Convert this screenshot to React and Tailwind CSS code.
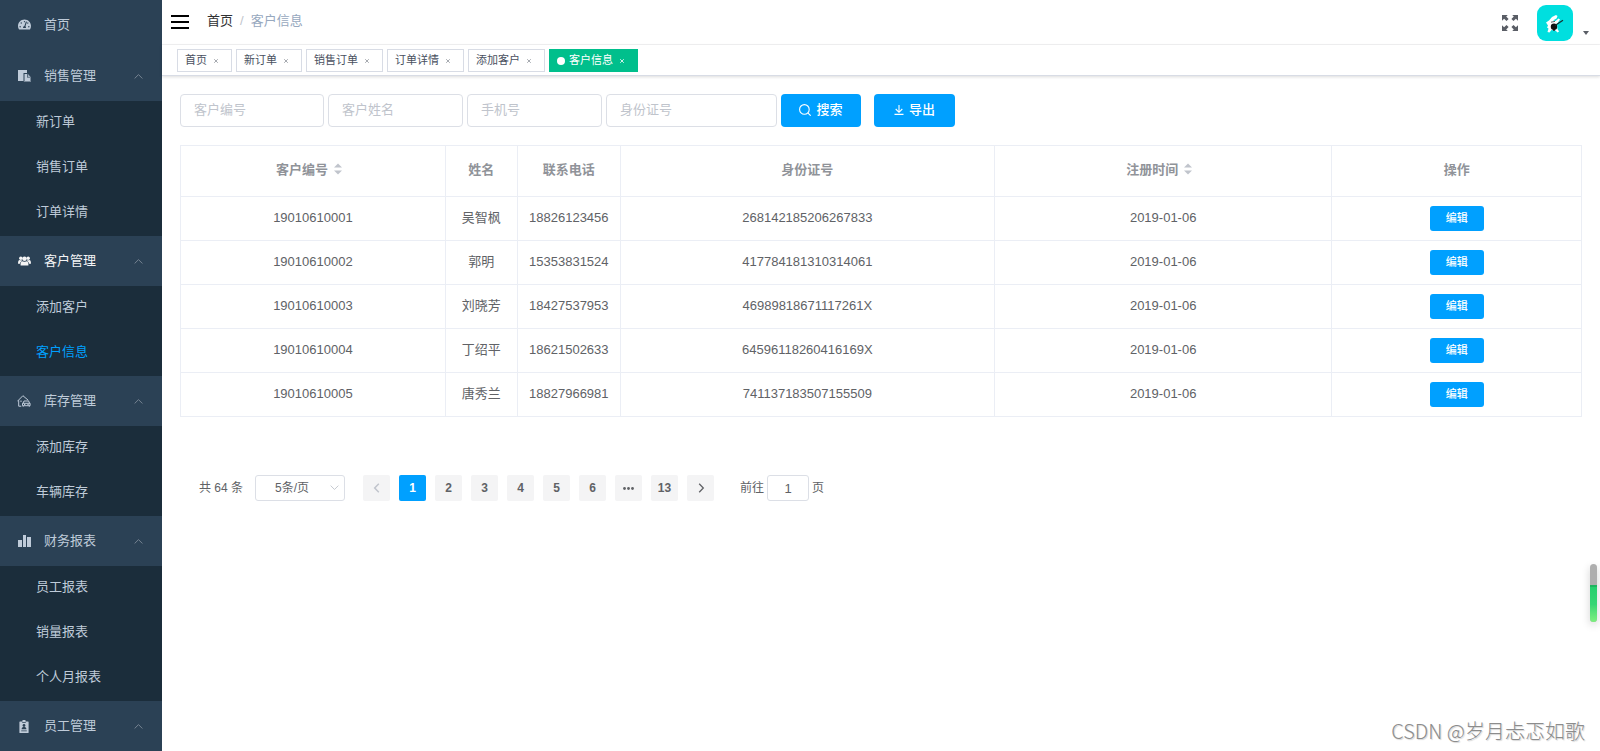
import React from "react";
import { FaTachometerAlt } from "react-icons/fa";

function PasteIcon() {
  return (
    <svg viewBox="0 0 13 12" className="h-3 w-[13px]" fill="currentColor" aria-hidden="true">
      <path d="M0 0h9v3H5.500v8H0z" />
      <path d="M6.500 4H9v3.500h3V11H6.500z" />
      <path d="M9.600 3.600 12.600 6.900h-3z" opacity="0.8" />
      <path d="M11.900 6.900h1.100V12H5.800v-1h6.100z" opacity="0.5" />
    </svg>
  );
}

function UsersIcon() {
  return (
    <svg viewBox="0 0 13 10" className="h-[10px] w-[13px]" fill="currentColor" aria-hidden="true">
      <circle cx="6.5" cy="2.700" r="2.300" />
      <circle cx="2.800" cy="2.200" r="1.700" />
      <circle cx="10.200" cy="2.200" r="1.700" />
      <path d="M2.600 9.600C2.200 6.600 3.400 5.200 4.900 5.200q1.600 1 3.200 0c1.500 0 2.700 1.400 2.300 4.400z" />
      <path d="M0 7.800C0 5 .7 4 1.700 4q1 .5 2 .2.200.5.500.7C2.900 5.300 2.200 6.100 2 7.800z" />
      <path d="M13 7.800C13 5 12.300 4 11.300 4q-1 .5-2 .2-.2.500-.5.700c1.300.4 2 1.200 2.200 2.900z" />
    </svg>
  );
}

function GarageIcon() {
  return (
    <svg viewBox="0 0 14 12" className="h-3 w-[14px]" fill="none" stroke="currentColor" strokeWidth="1" aria-hidden="true">
      <path d="M.4 6.300 5.900.7l5.400 4.600M1.700 5.300v5.900h2.600" />
      <path d="M6 8.300 7 6h4.600l1 2.300" />
      <path d="M5.500 8.300h7.600v2.400H5.500z" />
      <path d="M6.200 10.700v1M12.300 10.700v1M7 9.500h1.300M10.400 9.500h1.300M4 5.500v1.500" />
    </svg>
  );
}

function ChartIcon() {
  return (
    <svg viewBox="0 0 13 12" className="h-3 w-[13px]" fill="currentColor" aria-hidden="true">
      <path d="M0 5h4v7H0zM5 0h3v12H5zM9 2h4v10H9z" />
    </svg>
  );
}

function BadgeIcon() {
  return (
    <svg viewBox="0 0 10 13" className="h-[13px] w-[10px]" aria-hidden="true">
      <path fill="currentColor" d="M1 1.500h2.500V0h3v1.500H9q.6 0 .6.600v10.300q0 .6-.6.600H1q-.6 0-.6-.6V2.100q0-.6.600-.6z" />
      <path fill="#2b4155" d="M3.200 2.300h3.600v.8H3.200zM2.200 10.400h5.600v.8H2.200z" />
      <circle cx="5" cy="5.500" r="1.400" fill="#2b4155" />
      <path fill="#2b4155" d="M2.600 9.300c0-1.800 1-2.300 2.400-2.300s2.400.5 2.400 2.300z" />
    </svg>
  );
}

function Chevron({ className, d }) {
  return (
    <svg viewBox="0 0 10 10" className={className} fill="none" stroke="currentColor" strokeWidth="1" aria-hidden="true">
      <path d={d} />
    </svg>
  );
}

const UP = "M.7 7.200 5 2.900l4.300 4.300";
const DOWN = "M.7 2.900 5 7.200l4.300-4.300";
const LEFT = "M6.800.8 2.700 5l4.100 4.200";
const RIGHT = "M3.200.8 7.300 5 3.200 9.200";

const MENU = [
  { title: "销售管理", icon: <PasteIcon />, items: ["新订单", "销售订单", "订单详情"] },
  { title: "客户管理", icon: <UsersIcon />, items: ["添加客户", "客户信息"], active: true },
  { title: "库存管理", icon: <GarageIcon />, items: ["添加库存", "车辆库存"] },
  { title: "财务报表", icon: <ChartIcon />, items: ["员工报表", "销量报表", "个人月报表"] },
  { title: "员工管理", icon: <BadgeIcon />, items: [] },
];

const CURRENT = "客户信息";

function Sidebar() {
  return (
    <nav className="w-[162px] shrink-0 bg-[#2b4155] text-[13px] text-[#bfcbd9]">
      <a href="#home" className="flex h-[51px] items-center gap-[13px] pb-[2px] pl-[17px]">
        <span className="flex w-[14px] justify-center">
          <FaTachometerAlt size={13} />
        </span>
        首页
      </a>
      {MENU.map((group) => (
        <section key={group.title}>
          <button
            type="button"
            className={
              group.active
                ? "flex h-[50px] w-full items-center gap-[13px] pr-[19px] pl-[17px] text-[#f4f4f5]"
                : "flex h-[50px] w-full items-center gap-[13px] pr-[19px] pl-[17px]"
            }
          >
            <span className="flex w-[14px] justify-center">{group.icon}</span>
            {group.title}
            <Chevron d={UP} className="ml-auto size-[9px] text-[#7f8b99]" />
          </button>
          <ul className="bg-[#1b2d3b]">
            {group.items.map((item) => (
              <li key={item}>
                <a
                  href="#item"
                  className={
                    item === CURRENT
                      ? "flex h-[45px] items-center pb-[3px] pl-9 text-[#00a0ff]"
                      : "flex h-[45px] items-center pb-[3px] pl-9"
                  }
                >
                  {item}
                </a>
              </li>
            ))}
          </ul>
        </section>
      ))}
    </nav>
  );
}

function FullscreenIcon() {
  const arrow = "M0 0h5.800L4.200 1.600 6.600 4 4.500 6.100 2.100 3.700 0 5.800z";
  return (
    <svg viewBox="0 0 16 16" className="size-4" fill="#5a5e66" aria-hidden="true">
      <path d={arrow} />
      <path d={arrow} transform="translate(16 0) scale(-1 1)" />
      <path d={arrow} transform="translate(0 16) scale(1 -1)" />
      <path d={arrow} transform="translate(16 16) scale(-1 -1)" />
    </svg>
  );
}

function Avatar() {
  return (
    <svg viewBox="0 0 36 36" className="size-9 rounded-[9px]" aria-hidden="true">
      <rect width="36" height="36" fill="#00dfdf" />
      <path
        fill="#fff"
        d="M9 17.500 12 15.500 15 12 19 10 20.500 11 19.500 13.500 16 15.500 18.500 16 21.500 13.500 23 14.500 21 17.500 20 19 20.500 24 22 26.500 20.500 27.500 18.500 25.500 14.500 25 12.500 27.500 10.500 27 11.500 23.500 10 22.500 11 20.500z"
      />
      <path d="M14 17.200l4-.8" stroke="#2a3434" strokeWidth="0.800" fill="none" />
      <circle cx="17" cy="21.800" r="3.200" fill="#111" />
      <path stroke="#16302f" strokeWidth="1.200" fill="none" d="M18 20.500 26 15.300" />
      <path stroke="#111" strokeWidth="1.400" fill="none" d="M17 24v2" />
    </svg>
  );
}

function Navbar() {
  return (
    <header className="flex h-[45px] items-start border-b border-[#f3f3f4] pl-[9px]">
      <button type="button" aria-label="菜单" className="mt-[15px] flex h-[14px] w-[18px] flex-col justify-between">
        <span className="h-[2px] w-full bg-black" />
        <span className="h-[2px] w-full bg-black" />
        <span className="h-[2px] w-full bg-black" />
      </button>
      <nav className="mt-[11px] ml-[18px] flex h-5 items-center text-[13px]">
        <a href="#home" className="text-[#303133]">首页</a>
        <span className="px-[7px] text-[#c0c4cc]">/</span>
        <span className="text-[#97a8be]">{CURRENT}</span>
      </nav>
      <button type="button" aria-label="全屏" className="mt-[15px] ml-auto">
        <FullscreenIcon />
      </button>
      <button type="button" aria-label="用户" className="mt-[5px] mr-[11px] ml-[19px] flex items-end gap-[10px]">
        <Avatar />
        <svg viewBox="0 0 6 4" className="mb-[6px] h-1 w-[6px]" fill="#5a5e66" aria-hidden="true">
          <path d="M0 0h6L3 4z" />
        </svg>
      </button>
    </header>
  );
}

const TAGS = ["首页", "新订单", "销售订单", "订单详情", "添加客户", "客户信息"];

function TagsBar() {
  return (
    <div className="flex h-[31px] items-start gap-1 border-b border-[#d8dce5] pt-1 pl-[15px] shadow-[0_1px_3px_rgba(0,0,0,0.14)]">
      {TAGS.map((tag) => (
        <div
          key={tag}
          className={
            tag === CURRENT
              ? "flex h-[23px] items-center border border-[#00bf8c] bg-[#00bf8c] pr-[9px] pl-[7px] text-[11px] text-white"
              : "flex h-[23px] items-center border border-[#d8dce5] bg-white pr-[9px] pl-[7px] text-[11px] text-[#495060]"
          }
        >
          {tag === CURRENT && <span className="mr-1 size-2 rounded-full bg-white" />}
          <a href="#tag">{tag}</a>
          <button
            type="button"
            aria-label="关闭"
            className={tag === CURRENT ? "ml-[3px] flex w-3 justify-center" : "ml-[3px] flex w-3 justify-center text-[#8f949c]"}
          >
            <svg viewBox="0 0 4 4" className="size-1" stroke="currentColor" strokeWidth="0.8" aria-hidden="true">
              <path d="M.2.2l3.600 3.600M3.800.2.2 3.800" />
            </svg>
          </button>
        </div>
      ))}
    </div>
  );
}

function Filters() {
  const input =
    "h-[33px] rounded-[4px] border border-[#dcdfe6] px-[13px] pb-[2px] text-[13px] text-[#606266] outline-none placeholder:text-[#c0c4cc]";
  const button =
    "flex h-[33px] items-center justify-center gap-[5px] rounded-[4px] bg-[#00a0ff] pb-[2px] text-[13px] font-medium text-white";
  return (
    <form className="flex items-center gap-1">
      <input aria-label="客户编号" placeholder="客户编号" className={input + " w-36"} />
      <input aria-label="客户姓名" placeholder="客户姓名" className={input + " w-[135px]"} />
      <input aria-label="手机号" placeholder="手机号" className={input + " w-[135px]"} />
      <input aria-label="身份证号" placeholder="身份证号" className={input + " w-[171px]"} />
      <button type="button" className={button + " w-20"}>
        <svg viewBox="0 0 12 12" className="size-3" fill="none" stroke="currentColor" strokeWidth="1.100" aria-hidden="true">
          <circle cx="5.400" cy="5.400" r="4.800" />
          <path d="M8.800 8.800 11.700 11.700" />
        </svg>
        搜索
      </button>
      <button type="button" className={button + " ml-[9px] w-[81px]"}>
        <svg viewBox="0 0 10 10" className="size-[10px]" fill="none" stroke="currentColor" strokeWidth="1.100" aria-hidden="true">
          <path d="M5 0v7M1.700 4 5 7.300 8.300 4M.5 9.400h9" />
        </svg>
        导出
      </button>
    </form>
  );
}

const ROWS = [
  ["19010610001", "吴智枫", "18826123456", "268142185206267833", "2019-01-06"],
  ["19010610002", "郭明", "15353831524", "417784181310314061", "2019-01-06"],
  ["19010610003", "刘晓芳", "18427537953", "46989818671117261X", "2019-01-06"],
  ["19010610004", "丁绍平", "18621502633", "64596118260416169X", "2019-01-06"],
  ["19010610005", "唐秀兰", "18827966981", "741137183507155509", "2019-01-06"],
];

const COLUMNS = [
  { title: "客户编号", sortable: true },
  { title: "姓名" },
  { title: "联系电话" },
  { title: "身份证号" },
  { title: "注册时间", sortable: true },
  { title: "操作" },
];

function SortCarets() {
  return (
    <svg viewBox="0 0 8 12" className="mr-2 ml-[6px] h-3 w-2" fill="#c0c4cc" aria-hidden="true">
      <path d="M0 4.500 4 .5l4 4zM0 7.500h8l-4 4z" />
    </svg>
  );
}

function CustomerTable() {
  return (
    <table className="mt-[18px] w-full table-fixed border-collapse text-center text-[13px] text-[#606266]">
      <colgroup>
        <col className="w-[18.9%]" />
        <col className="w-[72px]" />
        <col className="w-[103px]" />
        <col className="w-[26.7%]" />
        <col className="w-[24.1%]" />
        <col />
      </colgroup>
      <thead>
        <tr className="h-[51px]">
          {COLUMNS.map((col) => (
            <th key={col.title} className="border border-[#ebeef5] p-0 pb-1 font-bold text-[#909399]">
              <span className="inline-flex items-center align-middle">
                {col.title}
                {col.sortable && <SortCarets />}
              </span>
            </th>
          ))}
        </tr>
      </thead>
      <tbody>
        {ROWS.map((row) => (
          <tr key={row[0]} className="h-11">
            {row.map((cell, i) => (
              <td key={i} className="border border-[#ebeef5] p-0 pb-[2px]">
                {cell}
              </td>
            ))}
            <td className="border border-[#ebeef5] p-0">
              <button
                type="button"
                className="inline-flex h-[25px] w-[54px] items-center justify-center rounded-[3px] bg-[#00a0ff] align-middle text-[11px] font-medium text-white"
              >
                编辑
              </button>
            </td>
          </tr>
        ))}
      </tbody>
    </table>
  );
}

const PAGES = ["1", "2", "3", "4", "5", "6", "more", "13"];

function Pagination() {
  const page = "flex h-[26px] w-[27px] items-center justify-center rounded-[2px] text-[12px] font-bold";
  return (
    <div className="mt-[58px] flex items-center pl-[19px] text-[12px] text-[#606266]">
      <span>共 64 条</span>
      <span className="relative ml-3 block">
        <select
          aria-label="每页条数"
          className="block h-[26px] w-[90px] appearance-none rounded-[3px] border border-[#dcdfe6] bg-white pl-[19px] text-[12px] outline-none"
        >
          <option>5条/页</option>
        </select>
        <Chevron d={DOWN} className="pointer-events-none absolute top-2 right-[6px] size-[9px] text-[#c0c4cc]" />
      </span>
      <div className="ml-[18px] flex gap-[9px]">
        <button type="button" aria-label="上一页" className={page + " bg-[#f4f4f5] text-[#c0c4cc]"}>
          <svg viewBox="0 0 10 10" className="size-[10px]" fill="none" stroke="currentColor" strokeWidth="1.500">
            <path d={LEFT} />
          </svg>
        </button>
        {PAGES.map((p) => (
          <button
            key={p}
            type="button"
            aria-label={p === "more" ? "更多" : undefined}
            className={page + (p === "1" ? " bg-[#00a0ff] text-white" : " bg-[#f4f4f5] text-[#606266]")}
          >
            {p === "more" ? (
              <svg viewBox="0 0 11 3" className="h-[3px] w-[11px]" fill="currentColor">
                <circle cx="1.500" cy="1.500" r="1.400" />
                <circle cx="5.500" cy="1.500" r="1.400" />
                <circle cx="9.500" cy="1.500" r="1.400" />
              </svg>
            ) : (
              p
            )}
          </button>
        ))}
        <button type="button" aria-label="下一页" className={page + " bg-[#f4f4f5] text-[#606266]"}>
          <svg viewBox="0 0 10 10" className="size-[10px]" fill="none" stroke="currentColor" strokeWidth="1.300">
            <path d={RIGHT} />
          </svg>
        </button>
      </div>
      <label className="ml-[26px] flex items-center gap-[3px]">
        前往
        <input
          defaultValue="1"
          className="h-[26px] w-[42px] rounded-[3px] border border-[#dcdfe6] text-center text-[13px] outline-none"
        />
        页
      </label>
    </div>
  );
}

export default function App() {
  return (
    <div className="relative flex min-h-screen bg-white font-['Liberation_Sans','Noto_Sans_CJK_SC',sans-serif]">
      <Sidebar />
      <div className="min-w-0 flex-1">
        <Navbar />
        <TagsBar />
        <main className="p-[18px]">
          <Filters />
          <CustomerTable />
          <Pagination />
        </main>
      </div>
      <div className="absolute right-[3px] bottom-[129px] flex h-[58px] w-[7px] flex-col overflow-hidden rounded-full bg-[#aeaeae] pt-[21px] shadow-[0_3px_8px_rgba(0,0,0,0.18)]">
        <div className="flex-1 border-t-2 border-[#1fb45f] bg-linear-to-b from-[#25cf6d] via-[#35d673] to-[#7df07f]" />
      </div>
      <p className="absolute right-[15px] bottom-[5px] font-['Noto_Sans_CJK_SC',sans-serif] text-[20px] font-light text-[#8c8c8c] [text-shadow:1px_1px_1px_#d4d4d4]">
        CSDN @岁月忐忑如歌
      </p>
    </div>
  );
}
